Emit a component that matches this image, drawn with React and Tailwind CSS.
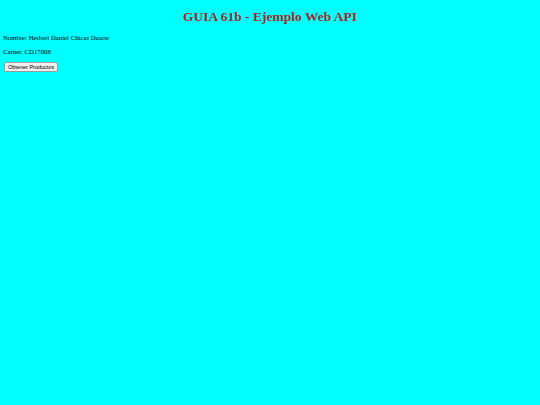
export default function App() {
	return (
		<div className="min-h-screen w-full bg-[#00ffff] px-[3px] pt-[10px] font-['Liberation_Serif',serif] text-black">
			<h1 className="text-center text-[13.5px] font-bold leading-[14px] text-[#a52a2a]">
				GUIA 61b - Ejemplo Web API
			</h1>
			<p className="mt-[10px] text-[6.75px] leading-[8px]">Nombre: Herbert Daniel Chicas Duarte</p>
			<p className="mt-[6px] text-[6.75px] leading-[8px]">Carnet: CD17008</p>
			<button className="mt-[6px] ml-[1px] block rounded-[2px] border border-[#9a9a9a] bg-[#efefef] px-[3px] py-[1px] font-['Liberation_Sans',sans-serif] text-[5.5px] leading-[6px]">
				Obtener Productos
			</button>
		</div>
	);
}
